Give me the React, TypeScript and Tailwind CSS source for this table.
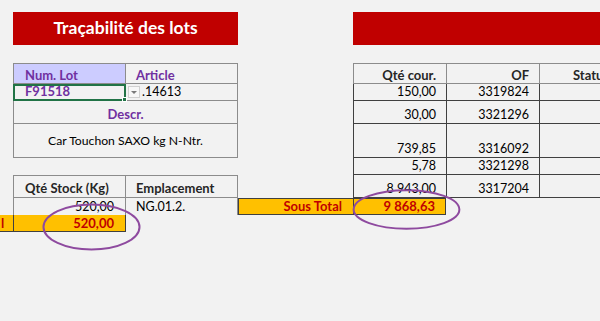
const FONT = { fontFamily: "Lato, 'Open Sans', sans-serif" };

type CellProps = {
  col: string;
  row: string;
  className?: string;
  children?: React.ReactNode;
};

// One spreadsheet cell placed on the sheet grid.
function Cell({ col, row, className = "", children }: CellProps) {
  return (
    <div className={`${col} ${row} box-border flex overflow-hidden whitespace-nowrap ${className}`}>
      {children}
    </div>
  );
}

function Ellipse({ className }: { className: string }) {
  return (
    <svg className={`pointer-events-none absolute ${className}`} viewBox="0 0 100 50" preserveAspectRatio="none">
      <ellipse
        cx="50"
        cy="25"
        rx="48.5"
        ry="23.5"
        fill="none"
        stroke="#8e4a9f"
        strokeWidth="2"
        vectorEffect="non-scaling-stroke"
      />
    </svg>
  );
}

export default function App() {
  return (
    <div className="relative h-[321px] w-[600px] overflow-hidden bg-[#f2f2f2] text-[12px] leading-[14px] text-black" style={FONT}>
      <div className="grid grid-cols-[13px_113px_112px_115px_93px_94px_60px] grid-rows-[12px_33px_18px_21px_17px_23px_34px_17px_23px_17px_17px]">
        {/* titles */}
        <Cell col="col-start-2 col-span-2" row="row-start-2" className="items-center justify-center bg-[#c00000] pb-[1px] text-[17.5px] leading-[20px] font-bold text-white">
          Traçabilité des lots
        </Cell>
        <Cell col="col-start-5 col-span-3" row="row-start-2" className="bg-[#c00000]" />

        {/* left block: lot */}
        <Cell col="col-start-2" row="row-start-4" className="items-center border border-[#8c8c8c] bg-[#ccccff] pl-[11px] pt-[2px] text-[13px] font-bold text-[#7030a0]">
          Num. Lot
        </Cell>
        <Cell col="col-start-3" row="row-start-4" className="items-center border-y border-r border-[#8c8c8c] pl-[10px] pt-[2px] text-[13px] font-bold text-[#7030a0]">
          Article
        </Cell>
        <Cell col="col-start-2" row="row-start-5" className="relative items-end overflow-visible border-2 border-[#217346] pb-[1px] pl-[10px] text-[13px] font-bold text-[#7030a0]">
          F91518
          <span className="absolute -bottom-[3px] -right-[3px] h-[5px] w-[5px] border border-white bg-[#217346]" />
        </Cell>
        <Cell col="col-start-3" row="row-start-5" className="items-end gap-[2px] border-b border-r border-[#8c8c8c] pb-[1px] pl-[2px] text-[12.5px]">
          <span className="mb-[1px] flex h-[12px] w-[12px] items-center justify-center border border-[#d0d0d0] bg-[#f7f7f7]">
            <span className="h-0 w-0 border-x-[3px] border-t-[3px] border-x-transparent border-t-[#7a7a7a]" />
          </span>
          .14613
        </Cell>
        <Cell col="col-start-2 col-span-2" row="row-start-6" className="items-end justify-center border-x border-b border-[#8c8c8c] pb-[2px] text-[13px] font-bold text-[#7030a0]">
          Descr.
        </Cell>
        <Cell col="col-start-2 col-span-2" row="row-start-7" className="items-center justify-center border-x border-b border-[#8c8c8c] text-[12.2px]">
          Car Touchon SAXO kg N-Ntr.
        </Cell>

        {/* left block: stock */}
        <Cell col="col-start-2" row="row-start-9" className="items-center border border-[#8c8c8c] pl-[11px] pt-[2px] text-[13px] font-bold text-[#262626]">
          Qté Stock (Kg)
        </Cell>
        <Cell col="col-start-3" row="row-start-9" className="items-center border-y border-r border-[#8c8c8c] pl-[10px] pt-[2px] text-[13px] font-bold text-[#262626]">
          Emplacement
        </Cell>
        <Cell col="col-start-2" row="row-start-10" className="items-end justify-end border-x border-[#8c8c8c] pb-[1px] pr-[11px] text-[12.5px]">
          520,00
        </Cell>
        <Cell col="col-start-3" row="row-start-10" className="items-end border-r border-[#8c8c8c] pb-[1px] pl-[10px] text-[12.5px]">
          NG.01.2.
        </Cell>
        <Cell col="col-start-4" row="row-start-10" className="items-end justify-end border-y border-l border-[#404040] bg-[#ffc000] pb-[1px] pr-[11px] text-[13px] font-bold text-[#c00000]">
          Sous Total
        </Cell>
        <Cell col="col-start-5" row="row-start-10" className="items-end justify-end border border-[#404040] bg-[#ffc000] pb-[1px] pr-[10px] text-[13px] font-bold text-[#c00000]">
          9 868,63
        </Cell>
        <Cell col="col-start-1" row="row-start-11" className="items-end justify-start border-b border-[#404040] bg-[#ffc000] pb-[1px] pl-[1px] text-[13px] font-bold text-[#c00000]">
          l
        </Cell>
        <Cell col="col-start-2" row="row-start-11" className="items-end justify-end border-x border-b border-[#404040] bg-[#ffc000] pb-[1px] pr-[11px] text-[13px] font-bold text-[#c00000]">
          520,00
        </Cell>

        {/* right block: header */}
        <Cell col="col-start-5" row="row-start-4" className="items-center justify-end border-y border-l border-[#8c8c8c] pr-[10px] pt-[2px] text-[13px] font-bold text-[#262626]">
          Qté cour.
        </Cell>
        <Cell col="col-start-6" row="row-start-4" className="items-center justify-end border border-[#8c8c8c] pr-[10px] pt-[2px] text-[13px] font-bold text-[#262626]">
          OF
        </Cell>
        <Cell col="col-start-7" row="row-start-4" className="items-center border-y border-[#8c8c8c] pl-[33px] pt-[2px] text-[13px] font-bold text-[#262626]">
          Statut
        </Cell>

        {/* right block: rows */}
        {[
          ["row-start-5", "150,00", "3319824"],
          ["row-start-6", "30,00", "3321296"],
          ["row-start-7", "739,85", "3316092"],
          ["row-start-8", "5,78", "3321298"],
          ["row-start-9", "8 943,00", "3317204"],
        ].map(([row, qty, of]) => (
          <div key={row} className="contents">
            <Cell col="col-start-5" row={row} className="items-end justify-end border-b border-l border-[#404040] pb-[1px] pr-[10px] text-[12.5px]">
              {qty}
            </Cell>
            <Cell col="col-start-6" row={row} className="items-end justify-end border-x border-b border-[#404040] pb-[1px] pr-[10px] text-[12.5px]">
              {of}
            </Cell>
            <Cell col="col-start-7" row={row} className="border-b border-[#404040]" />
          </div>
        ))}
      </div>

      {/* hand-drawn highlight circles */}
      <Ellipse className="left-[42px] top-[203px] h-[48px] w-[99px]" />
      <Ellipse className="left-[352px] top-[189px] h-[41px] w-[109px]" />
    </div>
  );
}
